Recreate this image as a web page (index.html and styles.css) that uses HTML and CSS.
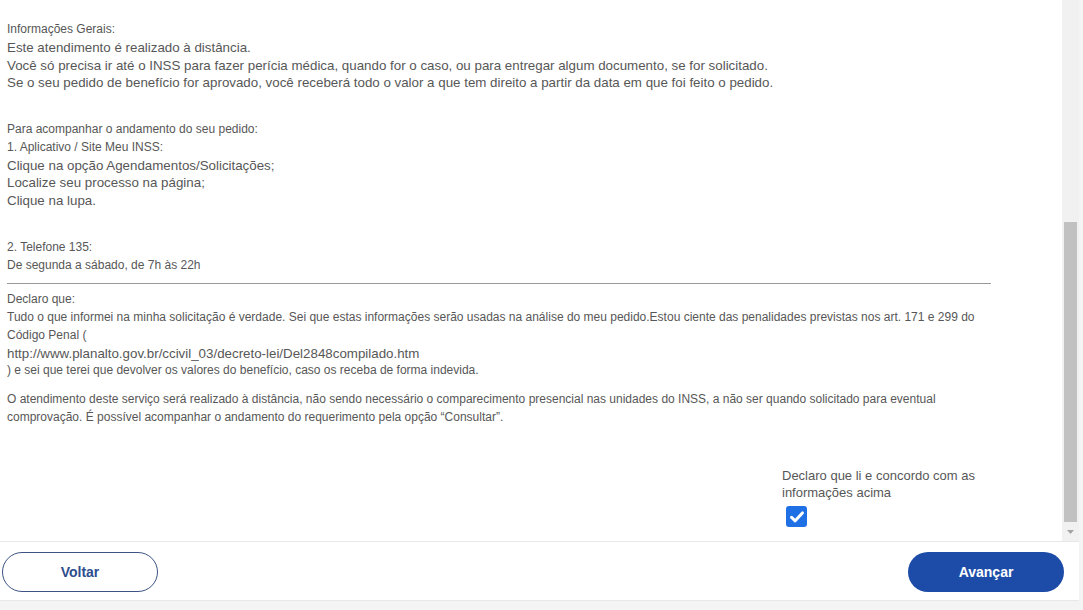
FILE: index.html
```html
<!DOCTYPE html>
<html lang="pt-BR">
<head>
    <meta charset="UTF-8">
    <meta name="viewport" content="width=device-width, initial-scale=1.0">
    <title>Meu INSS - Declaração</title>
    <link rel="stylesheet" href="styles.css">
</head>
<body>

    <div class="pagina">
        <div class="area-rolagem">
            <div class="conteudo">
                <div class="texto">
                    <div class="bloco">
                        <div class="pequeno">Informações Gerais:</div>
                        <div>Este atendimento é realizado à distância.</div>
                        <div>Você só precisa ir até o INSS para fazer perícia médica, quando for o caso, ou para entregar algum documento, se for solicitado.</div>
                        <div>Se o seu pedido de benefício for aprovado, você receberá todo o valor a que tem direito a partir da data em que foi feito o pedido.</div>
                    </div>

                    <div class="bloco">
                        <div class="pequeno">Para acompanhar o andamento do seu pedido:</div>
                        <div class="pequeno">1. Aplicativo / Site Meu INSS:</div>
                        <div>Clique na opção Agendamentos/Solicitações;</div>
                        <div>Localize seu processo na página;</div>
                        <div>Clique na lupa.</div>
                    </div>

                    <div class="bloco ultimo">
                        <div class="pequeno">2. Telefone 135:</div>
                        <div class="pequeno">De segunda a sábado, de 7h às 22h</div>
                    </div>

                    <hr class="divisor">

                    <div class="declaracao">
                        <div class="pequeno">Declaro que:</div>
                        <div class="pequeno">Tudo o que informei na minha solicitação é verdade. Sei que estas informações serão usadas na análise do meu pedido.Estou ciente das penalidades previstas nos art. 171 e 299 do Código Penal (</div>
                        <div>http://www.planalto.gov.br/ccivil_03/decreto-lei/Del2848compilado.htm</div>
                        <div class="pequeno">) e sei que terei que devolver os valores do benefício, caso os receba de forma indevida.</div>
                    </div>

                    <p class="pequeno aviso">O atendimento deste serviço será realizado à distância, não sendo necessário o comparecimento presencial nas unidades do INSS, a não ser quando solicitado para eventual comprovação. É possível acompanhar o andamento do requerimento pela opção “Consultar”.</p>

                    <div class="aceite">
                        <label class="aceite-box" for="concordo">
                            <span class="aceite-texto">Declaro que li e concordo com as informações acima</span>
                            <span class="checkbox" id="concordo">
                                <svg width="14" height="12" viewBox="0 0 14 12">
                                    <path d="M1.6 6.4 L5.2 9.8 L12.4 1.9" fill="none" stroke="#fff" stroke-width="3" stroke-linecap="round" stroke-linejoin="round"/>
                                </svg>
                            </span>
                        </label>
                    </div>
                </div>
            </div>

            <!-- barra de rolagem da janela interna -->
            <div class="barra-rolagem">
                <div class="barra-polegar"></div>
                <div class="barra-seta">
                    <svg width="7" height="4" viewBox="0 0 7 4"><path d="M0 0 H7 L3.5 4 Z" fill="#a3a3a3"/></svg>
                </div>
            </div>
        </div>

        <div class="rodape">
            <button type="button" class="btn btn-voltar">Voltar</button>
            <button type="button" class="btn btn-avancar">Avançar</button>
        </div>
    </div>

</body>
</html>
```

FILE: styles.css
```css
body {
    font-family: 'Liberation Sans', Arial, sans-serif;
    margin: 0;
    padding: 0;
    background-color: #f4f4f4;
    color: #575757;
}

.pagina {
    width: 1079px;
}

.area-rolagem {
    display: flex;
    height: 541px;
    background-color: #fff;
}

.conteudo {
    flex: 1;
    padding: 21px 0 0 7px;
}

.texto {
    width: 984px;
    font-size: 13.33px;
    line-height: 17.75px;
}

.pequeno {
    font-size: 12px;
}

.bloco {
    margin-bottom: 29px;
}

.bloco.ultimo {
    margin-bottom: 0;
}

.divisor {
    border: none;
    border-top: 1px solid #9a9a9a;
    margin: 9px 0 7px 0;
}

.aviso {
    margin: 11px 0 0 0;
}

.aceite {
    display: flex;
    justify-content: flex-end;
    margin-top: 40px;
}

.aceite-box {
    width: 209px;
    display: flex;
    flex-direction: column;
    align-items: flex-start;
    cursor: pointer;
}

.aceite-texto {
    font-size: 13px;
    line-height: 17.75px;
}

.checkbox {
    width: 21px;
    height: 21px;
    margin: 4px 0 0 4px;
    background-color: #1f6fe5;
    border-radius: 3px;
    display: flex;
    justify-content: center;
    align-items: center;
}

.barra-rolagem {
    width: 17px;
    background-color: #f1f1f1;
    display: flex;
    flex-direction: column;
    justify-content: flex-end;
}

.barra-polegar {
    height: 300px;
    margin: 0 2px;
    background-color: #c1c1c1;
}

.barra-seta {
    height: 19px;
    display: flex;
    justify-content: center;
    align-items: center;
}

.rodape {
    height: 48px;
    background-color: #fff;
    border-top: 1px solid #e8e8e8;
    border-bottom: 1px solid #e8e8e8;
    display: flex;
    justify-content: space-between;
    align-items: flex-start;
    padding: 10px 15px 0 2px;
}

.btn {
    width: 156px;
    height: 40px;
    border-radius: 20px;
    font-family: 'Liberation Sans', Arial, sans-serif;
    font-weight: bold;
    font-size: 14px;
    cursor: pointer;
}

.btn-voltar {
    background-color: #fff;
    border: 1px solid #3b5283;
    color: #2d4e8e;
}

.btn-avancar {
    background-color: #1d4ca8;
    border: none;
    color: #fff;
}
```
